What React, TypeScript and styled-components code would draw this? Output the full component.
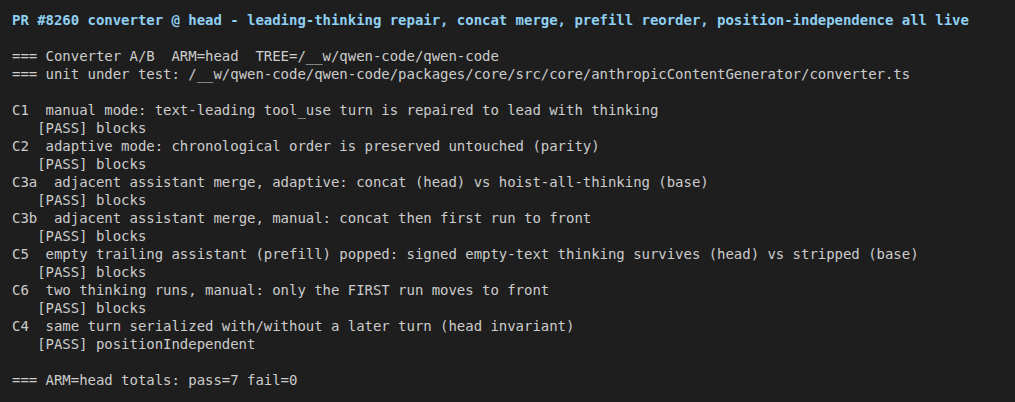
import React from "react";
import styled, { createGlobalStyle } from "styled-components";

const Global = createGlobalStyle`
  html, body { margin: 0; padding: 0; background: #1e1e1e; }
  body { width: 1015px; height: 402px; overflow: hidden; }
`;

const Terminal = styled.div`
  box-sizing: border-box;
  width: 1015px;
  height: 402px;
  background: #1e1e1e;
  padding: 11px 12px;
  font-family: "DejaVu Sans Mono", monospace;
  font-size: 14px;
  letter-spacing: -0.035px;
  line-height: 18px;
  color: #cccccc;
  display: flex;
  flex-direction: column;
`;

const Line = styled.div<{ $title?: boolean; $indent?: number }>`
  white-space: pre;
  height: 18px;
  color: ${(p) => (p.$title ? "#8fcff2" : "#cccccc")};
  font-weight: ${(p) => (p.$title ? 700 : 400)};
  padding-left: ${(p) => (p.$indent ?? 0) * 8.39}px;
`;

const cases: [string, string][] = [
  ["C1  manual mode: text-leading tool_use turn is repaired to lead with thinking", "blocks"],
  ["C2  adaptive mode: chronological order is preserved untouched (parity)", "blocks"],
  ["C3a  adjacent assistant merge, adaptive: concat (head) vs hoist-all-thinking (base)", "blocks"],
  ["C3b  adjacent assistant merge, manual: concat then first run to front", "blocks"],
  ["C5  empty trailing assistant (prefill) popped: signed empty-text thinking survives (head) vs stripped (base)", "blocks"],
  ["C6  two thinking runs, manual: only the FIRST run moves to front", "blocks"],
  ["C4  same turn serialized with/without a later turn (head invariant)", "positionIndependent"],
];

export default function App() {
  return (
    <>
      <Global />
      <Terminal>
        <Line $title>
          PR #8260 converter @ head - leading-thinking repair, concat merge, prefill reorder, position-independence all live
        </Line>
        <Line> </Line>
        <Line>=== Converter A/B  ARM=head  TREE=/__w/qwen-code/qwen-code</Line>
        <Line>=== unit under test: /__w/qwen-code/qwen-code/packages/core/src/core/anthropicContentGenerator/converter.ts</Line>
        <Line> </Line>
        {cases.map(([head, res]) => (
          <React.Fragment key={head}>
            <Line>{head}</Line>
            <Line $indent={3}>[PASS] {res}</Line>
          </React.Fragment>
        ))}
        <Line> </Line>
        <Line>=== ARM=head totals: pass=7 fail=0</Line>
      </Terminal>
    </>
  );
}
